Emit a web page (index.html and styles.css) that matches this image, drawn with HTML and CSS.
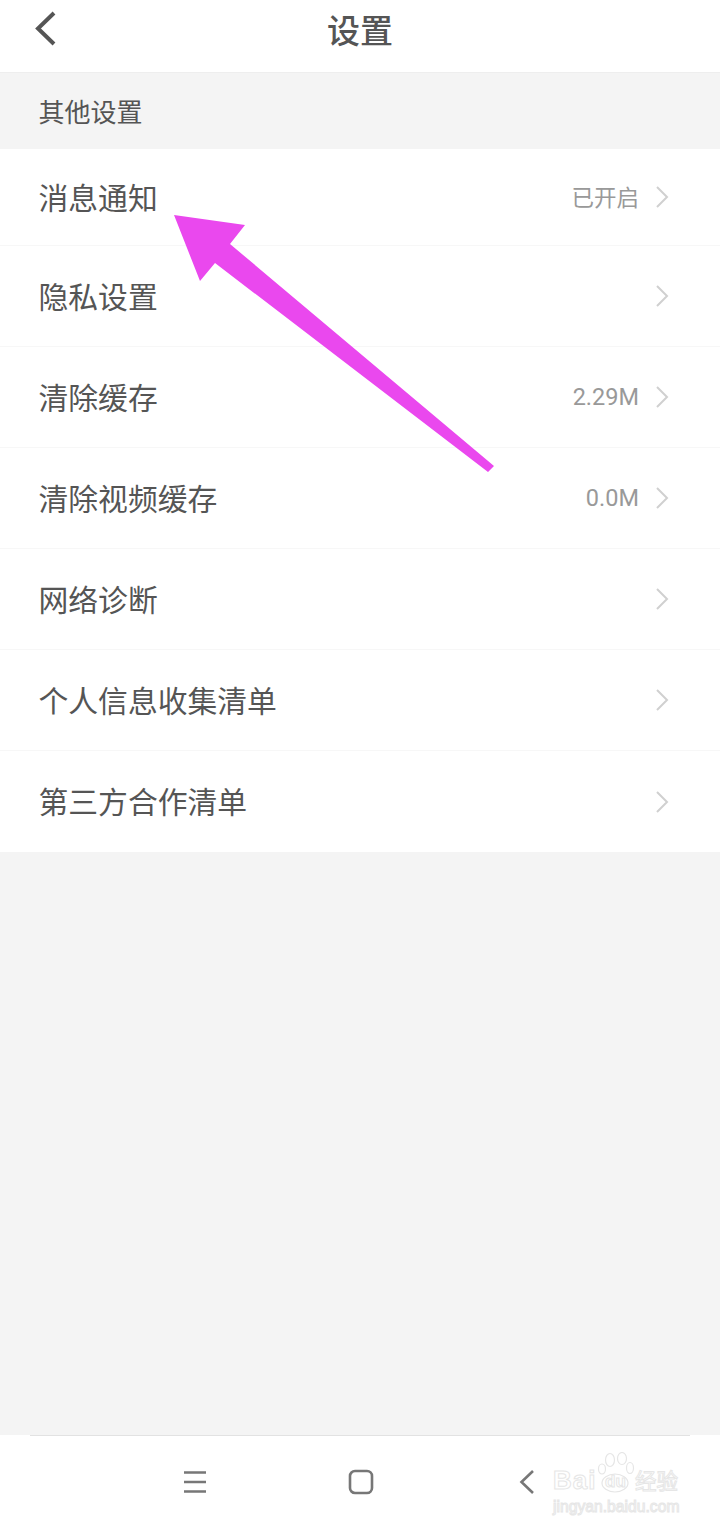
FILE: index.html
```html
<!DOCTYPE html>
<html>

	<head>
		<meta charset="UTF-8">
		<title>设置</title>
		<link rel="stylesheet" href="styles.css">
	</head>

	<body>
		<div class="page">
			<div class="header">
				<svg class="backIcon" width="24" height="36" viewBox="0 0 24 36">
					<path d="M21 2L5 17.5L21 33" />
				</svg>
				<div class="headerTitle">设置</div>
			</div>

			<div class="sectionTitle">其他设置</div>

			<div class="list">
				<div class="row rowFirst">
					<span class="rowName">消息通知</span>
					<span class="rowValue">已开启</span>
					<svg class="rowArrow" width="14" height="24" viewBox="0 0 14 24"><path d="M2 2L12 12L2 22" /></svg>
				</div>
				<div class="row">
					<span class="rowName">隐私设置</span>
					<svg class="rowArrow" width="14" height="24" viewBox="0 0 14 24"><path d="M2 2L12 12L2 22" /></svg>
				</div>
				<div class="row">
					<span class="rowName">清除缓存</span>
					<span class="rowValue rowNum">2.29M</span>
					<svg class="rowArrow" width="14" height="24" viewBox="0 0 14 24"><path d="M2 2L12 12L2 22" /></svg>
				</div>
				<div class="row">
					<span class="rowName">清除视频缓存</span>
					<span class="rowValue rowNum">0.0M</span>
					<svg class="rowArrow" width="14" height="24" viewBox="0 0 14 24"><path d="M2 2L12 12L2 22" /></svg>
				</div>
				<div class="row">
					<span class="rowName">网络诊断</span>
					<svg class="rowArrow" width="14" height="24" viewBox="0 0 14 24"><path d="M2 2L12 12L2 22" /></svg>
				</div>
				<div class="row">
					<span class="rowName">个人信息收集清单</span>
					<svg class="rowArrow" width="14" height="24" viewBox="0 0 14 24"><path d="M2 2L12 12L2 22" /></svg>
				</div>
				<div class="row rowLast">
					<span class="rowName">第三方合作清单</span>
					<svg class="rowArrow" width="14" height="24" viewBox="0 0 14 24"><path d="M2 2L12 12L2 22" /></svg>
				</div>
			</div>

			<div class="filler"></div>

			<div class="navBar">
				<div class="navItem">
					<svg width="24" height="24" viewBox="0 0 24 24"><path d="M1 2.5H23M1 12H23M1 21.5H23" /></svg>
				</div>
				<div class="navItem">
					<svg width="26" height="26" viewBox="0 0 26 26"><rect x="2" y="2" width="22" height="22" rx="5" /></svg>
				</div>
				<div class="navItem">
					<svg width="16" height="26" viewBox="0 0 16 26"><path d="M14 2L2.5 13L14 24" /></svg>
				</div>
			</div>
		</div>

		<!-- annotation drawn over the screenshot -->
		<svg class="markArrow" width="720" height="500" viewBox="0 0 720 500">
			<polygon points="174,215 245,225 230,244 494,466 488,472 215,263 200,281" />
		</svg>

		<div class="watermark">
			<div class="wmTop">
				<span class="wmBai">Bai</span>
				<span class="wmPaw">
					<svg width="38" height="41" viewBox="0 0 38 41">
						<ellipse cx="5" cy="17" rx="3.5" ry="5" />
						<ellipse cx="13" cy="8" rx="4.5" ry="6.5" />
						<ellipse cx="25" cy="6.5" rx="4.5" ry="6" />
						<ellipse cx="33" cy="16" rx="3.5" ry="5.5" />
						<ellipse cx="18" cy="31" rx="13" ry="9" />
					</svg>
					<span class="wmDu">du</span>
				</span>
				<span class="wmJy">经验</span>
			</div>
			<div class="wmUrl">jingyan.baidu.com</div>
		</div>
	</body>

</html>
```

FILE: styles.css
```css
* {
	box-sizing: border-box;
}

body {
	margin: 0;
	padding: 0;
	font-family: "Noto Sans CJK SC", "Noto Sans", sans-serif;
	color: #555;
	background: #f4f4f4;
}

.page {
	width: 720px;
	height: 1530px;
	display: flex;
	flex-direction: column;
}

.header {
	height: 73px;
	flex: none;
	position: relative;
	display: flex;
	align-items: center;
	justify-content: center;
	background: #fff;
	border-bottom: 1px solid #eeeeee;
}

.backIcon {
	position: absolute;
	left: 33px;
	top: 11px;
}

.backIcon path {
	fill: none;
	stroke: #555;
	stroke-width: 4;
}

.headerTitle {
	font-size: 33px;
	font-weight: 500;
	line-height: 44px;
	margin-top: -15px;
}

.sectionTitle {
	height: 76px;
	flex: none;
	padding-left: 38.5px;
	font-size: 26px;
	line-height: 76px;
	background: #f4f4f4;
}

.list {
	flex: none;
	background: #fff;
}

.row {
	height: 101px;
	display: flex;
	align-items: center;
	padding: 0 51px 0 38.5px;
	border-bottom: 1px solid #f7f7f7;
}

.rowFirst {
	height: 97px;
}

.rowLast {
	border-bottom: none;
}

.rowName {
	font-size: 29.8px;
	flex: 1;
	margin-top: -3px;
}

.rowValue {
	font-size: 22.5px;
	color: #999;
	margin-right: 16px;
	margin-top: -3px;
}

.rowNum {
	font-family: "Roboto", sans-serif;
	font-size: 23.5px;
	margin-top: 0;
}

.rowArrow {
	flex: none;
}

.rowArrow path {
	fill: none;
	stroke: #d0d0d0;
	stroke-width: 2;
}

.filler {
	flex: 1;
	background: #f4f4f4;
}

.navBar {
	height: 95px;
	flex: none;
	display: grid;
	grid-template-columns: repeat(3, 166px);
	align-items: center;
	padding: 0 0 0 112px;
	background: #fff;
	position: relative;
}

.navBar::before {
	content: "";
	position: absolute;
	left: 30px;
	right: 30px;
	top: 0;
	height: 1px;
	background: #e2e2e2;
}

.navItem {
	display: flex;
	justify-content: center;
	margin-top: -1px;
}

.navItem svg * {
	fill: none;
	stroke: #777;
	stroke-width: 2.6;
}

.markArrow {
	position: absolute;
	left: 0;
	top: 0;
}

.markArrow polygon {
	fill: #ea48ee;
}

/* baidu mark: outlined letters, very faint */
.watermark {
	position: absolute;
	left: 553px;
	top: 1452px;
	width: 130px;
	color: transparent;
	-webkit-text-stroke: 1px #e6e6e6;
}

.wmTop {
	display: flex;
	align-items: flex-end;
	height: 41px;
}

.wmBai {
	font-family: "Liberation Sans", sans-serif;
	font-size: 26px;
	font-weight: 700;
	line-height: 26px;
	width: 44px;
	letter-spacing: 1px;
}

.wmPaw {
	position: relative;
	width: 38px;
	height: 41px;
	flex: none;
}

.wmPaw svg {
	display: block;
}

.wmPaw svg * {
	fill: #fff;
	stroke: #e6e6e6;
	stroke-width: 1.2;
}

.wmDu {
	position: absolute;
	left: 8px;
	bottom: 2px;
	font-family: "Liberation Sans", sans-serif;
	font-size: 17px;
	font-weight: 700;
	line-height: 18px;
}

.wmJy {
	font-size: 21.5px;
	line-height: 26px;
	white-space: nowrap;
}

.wmUrl {
	font-family: "Liberation Sans", sans-serif;
	font-size: 15.7px;
	line-height: 18px;
	margin-top: 5px;
	white-space: nowrap;
}
```
